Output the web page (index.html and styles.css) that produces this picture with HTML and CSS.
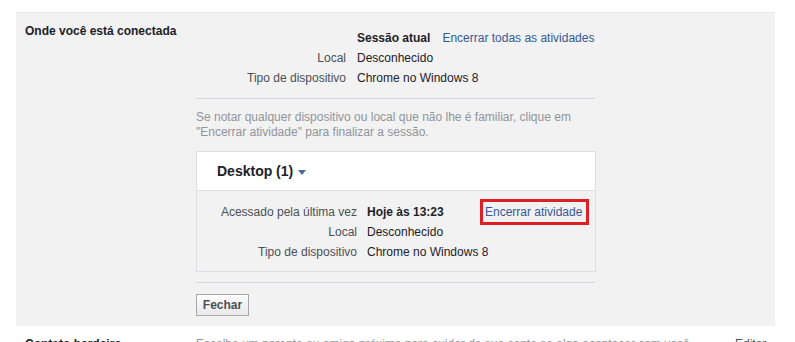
FILE: index.html
```html
<!DOCTYPE html>
<html lang="pt-br">
<head>
  <meta charset="UTF-8">
  <title>Segurança e login</title>
  <link rel="stylesheet" href="styles.css">
</head>
<body>

  <div class="settings-panel">
    <div class="row-label">Onde você está conectada</div>
    <div class="row-content">
      <div class="session-table">
        <span class="cell-label"></span>
        <span class="cell-value"><strong>Sessão atual</strong><a class="link end-all" href="#">Encerrar todas as atividades</a></span>
        <span class="cell-label">Local</span>
        <span class="cell-value">Desconhecido</span>
        <span class="cell-label">Tipo de dispositivo</span>
        <span class="cell-value">Chrome no Windows 8</span>
      </div>

      <hr class="divider">

      <p class="hint">Se notar qualquer dispositivo ou local que não lhe é familiar, clique em "Encerrar atividade" para finalizar a sessão.</p>

      <div class="device-box">
        <div class="device-head">Desktop (1) <span class="caret"></span></div>
        <div class="device-body">
          <span class="cell-label">Acessado pela última vez</span>
          <span class="cell-value"><strong>Hoje às 13:23</strong></span>
          <span class="cell-action"><a class="link end-one" href="#">Encerrar atividade</a></span>
          <span class="cell-label">Local</span>
          <span class="cell-value">Desconhecido</span>
          <span></span>
          <span class="cell-label">Tipo de dispositivo</span>
          <span class="cell-value">Chrome no Windows 8</span>
          <span></span>
        </div>
      </div>

      <hr class="divider">

      <button class="btn">Fechar</button>
    </div>
  </div>

  <div class="settings-row">
    <div class="row-label">Contato herdeiro</div>
    <div class="row-text">Escolha um parente ou amigo próximo para cuidar da sua conta se algo acontecer com você.</div>
    <a class="row-edit" href="#">Editar</a>
  </div>

</body>
</html>
```

FILE: styles.css
```css
body {
  font-family: "Liberation Sans", Arial, sans-serif;
  font-size: 12px;
  color: #1d2129;
  margin: 0;
  background-color: #fff;
}
.link {
  color: #365899;
  text-decoration: none;
}
.settings-panel {
  display: flex;
  margin-top: 12px;
  margin-left: 16px;
  width: 759px;
  box-sizing: border-box;
  padding: 10px 0 10px 9px;
  background-color: #f2f2f2;
  border-top: 1px solid #e5e5e5;
}
.row-label {
  width: 171px;
  font-weight: bold;
  line-height: 16px;
}
.row-content {
  width: 400px;
}
.session-table {
  display: grid;
  grid-template-columns: 150px auto;
  column-gap: 11px;
  line-height: 20px;
  margin-top: 5px;
}
.cell-label {
  text-align: right;
  color: #4b4f56;
}
.cell-value {
  white-space: nowrap;
}
.end-all {
  margin-left: 12px;
}
.divider {
  border: none;
  border-top: 1px solid #d3d6db;
  margin: 10px 0 11px;
  width: 399px;
}
.hint {
  margin: 0 0 11px;
  color: #90949c;
  line-height: 15px;
}
.device-box {
  border: 1px solid #dddfe2;
}
.device-head {
  background-color: #fff;
  height: 38px;
  line-height: 38px;
  padding-left: 20px;
  font-size: 14px;
  font-weight: bold;
  border-bottom: 1px solid #dddfe2;
}
.caret {
  display: inline-block;
  border-left: 4px solid transparent;
  border-right: 4px solid transparent;
  border-top: 5px solid #4b6aa0;
  vertical-align: middle;
  margin-left: 1px;
}
.device-body {
  display: grid;
  grid-template-columns: 160px 108px auto;
  column-gap: 10px;
  line-height: 20px;
  padding: 11px 0 9px;
}
.end-one {
  display: inline-block;
  border: 3px solid #dd1f26;
  padding: 0 4px 0 2px;
  margin: -3px 0 -3px -5px;
}
.btn {
  font-family: "Liberation Sans", Arial, sans-serif;
  font-size: 12px;
  font-weight: bold;
  color: #4b4f56;
  height: 22px;
  width: 53px;
  padding: 0;
  border: 1px solid #a8a8a8;
  background: linear-gradient(#fcfcfc, #e9e9e9);
  margin-top: 9px;
  display: block;
}
.settings-row {
  display: flex;
  padding: 10px 0 0 25px;
  line-height: 16px;
}
.row-text {
  width: 539px;
  color: #90949c;
}
.row-edit {
  color: #4b4f56;
  text-decoration: none;
}
```
